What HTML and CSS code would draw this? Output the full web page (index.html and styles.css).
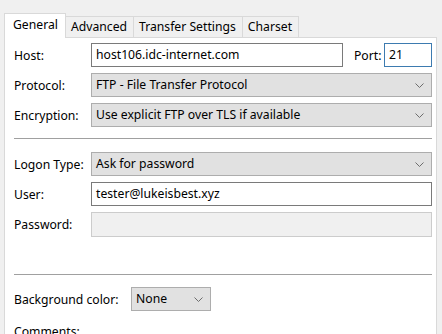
FILE: index.html
```html
<!DOCTYPE html>
<html lang="en">

<head>
    <meta charset="UTF-8">
    <title>Site Manager - General</title>
    <link rel="stylesheet" href="styles.css">
</head>

<body>
    <div class="tabs">
        <div class="tab active">General</div>
        <div class="tab">Advanced</div>
        <div class="tab">Transfer Settings</div>
        <div class="tab">Charset</div>
    </div>

    <div class="panel">
        <div class="row">
            <label class="lbl">Host:</label>
            <div class="field text host">host106.idc-internet.com</div>
            <label class="port-lbl">Port:</label>
            <div class="field text port">21</div>
        </div>
        <div class="row">
            <label class="lbl">Protocol:</label>
            <div class="field select">FTP - File Transfer Protocol
                <svg class="chev" width="9" height="5" viewBox="0 0 9 5"><path d="M0.5 0.5 L4.5 4.5 L8.5 0.5" fill="none" stroke="#6d6d6d" stroke-width="1"/></svg>
            </div>
        </div>
        <div class="row">
            <label class="lbl">Encryption:</label>
            <div class="field select">Use explicit FTP over TLS if available
                <svg class="chev" width="9" height="5" viewBox="0 0 9 5"><path d="M0.5 0.5 L4.5 4.5 L8.5 0.5" fill="none" stroke="#6d6d6d" stroke-width="1"/></svg>
            </div>
        </div>

        <hr class="sep">

        <div class="row">
            <label class="lbl">Logon Type:</label>
            <div class="field select">Ask for password
                <svg class="chev" width="9" height="5" viewBox="0 0 9 5"><path d="M0.5 0.5 L4.5 4.5 L8.5 0.5" fill="none" stroke="#6d6d6d" stroke-width="1"/></svg>
            </div>
        </div>
        <div class="row">
            <label class="lbl">User:</label>
            <div class="field text">tester@lukeisbest.xyz</div>
        </div>
        <div class="row">
            <label class="lbl">Password:</label>
            <div class="field disabled"></div>
        </div>

        <hr class="sep sep2">

        <div class="row">
            <label class="lbl wide">Background color:</label>
            <div class="field select small">None
                <svg class="chev" width="9" height="5" viewBox="0 0 9 5"><path d="M0.5 0.5 L4.5 4.5 L8.5 0.5" fill="none" stroke="#6d6d6d" stroke-width="1"/></svg>
            </div>
        </div>
        <div class="comments">Comments:</div>
    </div>
</body>

</html>
```

FILE: styles.css
```css
body {
    margin: 0;
    background: #f0f0f0;
    font-family: "Noto Sans", "Open Sans", sans-serif;
    font-size: 12.2px;
    color: #000;
    height: 334px;
    overflow: hidden;
}

.tabs {
    display: flex;
    align-items: flex-end;
    padding: 13px 0 0 4px;
    height: 24px;
    position: relative;
    z-index: 1;
}

.tab {
    height: 20px;
    line-height: 20px;
    padding: 0 6px 0 5px;
    border: 1px solid #d9d9d9;
    border-bottom: none;
    border-left: none;
    background: #f0f0f0;
}

.tab.active {
    height: 24px;
    line-height: 22px;
    border-left: 1px solid #d9d9d9;
    background: #fff;
    padding: 0 7px 0 8px;
    margin-bottom: -1px;
}

.panel {
    margin: 0 5px 0 4px;
    background: #fff;
    border: 1px solid #d9d9d9;
    padding: 5px 4px 0 9px;
    height: 300px;
}

.row {
    display: flex;
    align-items: center;
    height: 24px;
    margin-bottom: 6px;
}

.lbl {
    width: 77px;
    flex-shrink: 0;
}

.lbl.wide {
    width: 117px;
}

.field {
    flex: 1;
    height: 24px;
    box-sizing: border-box;
    line-height: 22px;
    padding: 0 4px;
    position: relative;
    white-space: nowrap;
}

.text {
    border: 1px solid #7a7a7a;
    background: #fff;
}

.host {
    flex: 0 0 252px;
}

.port-lbl {
    margin-left: 11px;
    width: 31px;
}

.port {
    flex: 0 0 48px;
    border-color: #3d7bb0;
}

.select {
    border: 1px solid #adadad;
    background: #e1e1e1;
}

.select.small {
    flex: 0 0 80px;
}

.chev {
    position: absolute;
    right: 7px;
    top: 9px;
}

.disabled {
    border: 1px solid #cccccc;
    background: #f0f0f0;
    height: 25px;
}

.sep {
    border: none;
    border-top: 1px solid #a0a0a0;
    margin: 11px 0 13px 0;
}

.sep2 {
    margin: 38px 0 12px 0;
}

.comments {
    margin-top: 12px;
}
```
